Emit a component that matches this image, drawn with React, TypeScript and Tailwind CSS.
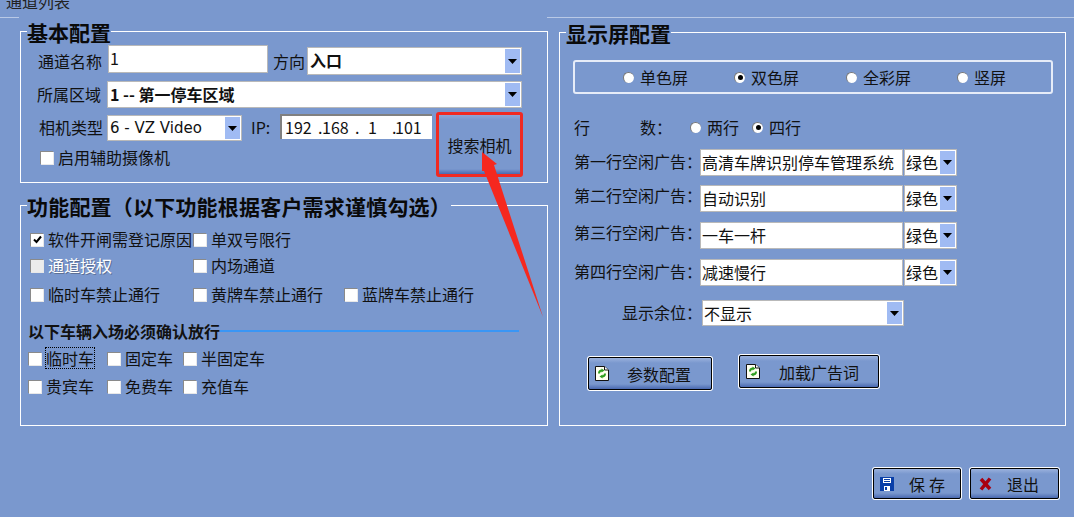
import React from 'react';

const Arrow = () => (
  <svg width="9" height="5" viewBox="0 0 9 5"><path d="M0 0h9L4.5 5z" fill="#000" /></svg>
);

const Combo: React.FC<{ text: string; className: string; bold?: boolean; textClass?: string }> = ({ text, className, bold, textClass }) => (
  <div className={`flex border border-[#b9b9b9] bg-white p-px shrink-0 ${className}`}>
    <span className={`flex-1 pl-px leading-[22px] whitespace-nowrap text-[#111] ${textClass ?? 'text-[16px]'} ${bold ? 'font-bold' : ''}`}>{text}</span>
    <span className="w-[15px] bg-[#a0bbf3] flex items-center justify-center shrink-0"><Arrow /></span>
  </div>
);

const Input: React.FC<{ text: string; className?: string }> = ({ text, className }) => (
  <div className={`border border-[#b9b9b9] bg-white pl-px text-[16px] leading-[24px] whitespace-nowrap text-[#111] shrink-0 h-[27px] ${className ?? ''}`}>{text}</div>
);

const Check: React.FC<{ label: string; className?: string; checked?: boolean; disabled?: boolean; focus?: boolean }> = ({ label, className, checked, disabled, focus }) => (
  <label className={`flex items-center h-[20px] shrink-0 ${className ?? ''}`}>
    <span className={`w-[13px] h-[13px] border-t border-l border-[#8a8a8a] shadow-[1px_1px_0_#e8e8e8] flex items-center justify-center shrink-0 ${disabled ? 'bg-[#ececec]' : 'bg-white'}`}>
      {checked && (
        <svg width="9" height="9" viewBox="0 0 9 9"><path d="M1 4.500 3.500 7 8 1.500" stroke="#000" strokeWidth="2" fill="none" /></svg>
      )}
    </span>
    <span className={`ml-[5px] text-[16px] leading-[20px] whitespace-nowrap ${disabled ? 'text-white [text-shadow:1px_1px_0_#5d7096]' : 'text-[#111]'} ${focus ? 'outline-1 outline-dotted outline-black' : ''}`}>{label}</span>
  </label>
);

const Radio: React.FC<{ label: string; className?: string; checked?: boolean }> = ({ label, className, checked }) => (
  <label className={`flex items-center h-[20px] shrink-0 ${className ?? ''}`}>
    <span className="w-[11px] h-[11px] rounded-full bg-white border-t border-l border-[#777] flex items-center justify-center shrink-0">
      {checked && <span className="w-[5px] h-[5px] rounded-full bg-black" />}
    </span>
    <span className="ml-[6px] text-[16px] leading-[20px] whitespace-nowrap text-[#111]">{label}</span>
  </label>
);

const RefreshDoc = () => (
  <svg width="14" height="15" viewBox="0 0 14 15" className="shrink-0">
    <path d="M.5.5h9l4 3.500v10.500H.5z" fill="#fffff0" stroke="#111" />
    <path d="M9.500.5v3.500h4" fill="#fff" stroke="#111" />
    <path d="M4 7.500c0-2 1.500-3 3-3" stroke="#2f9e1f" strokeWidth="2" fill="none" />
    <path d="M6.500 2.500l3 2-3 2z" fill="#2f9e1f" />
    <path d="M10 7.500c0 2-1.500 3-3 3" stroke="#2f9e1f" strokeWidth="2" fill="none" />
    <path d="M7.500 8.500l-3 2 3 2z" fill="#2f9e1f" />
  </svg>
);

const Floppy = () => (
  <svg width="14" height="14" viewBox="0 0 14 14" className="shrink-0">
    <path d="M0 0h14v14H0z" fill="#0a3fa8" />
    <path d="M3 1h8v5H3z" fill="#fff" />
    <path d="M4 2.500h6M4 4.500h6" stroke="#0a3fa8" />
    <path d="M4 9h6v5H4z" fill="#fff" />
    <path d="M5 10h2v3H5z" fill="#0a3fa8" />
  </svg>
);

const RedX = () => (
  <svg width="13" height="14" viewBox="0 0 13 14" className="shrink-0">
    <path d="M2 2l9 10M11 1.500 2 12.500" stroke="#a80010" strokeWidth="3.500" fill="none" />
  </svg>
);

const Btn: React.FC<{ icon: React.ReactNode; className?: string; children: React.ReactNode; textClass: string }> = ({ icon, className, children, textClass }) => (
  <button className={`flex items-center border border-black rounded-[2px] ring-1 ring-white bg-[linear-gradient(#9ab1dd_0,#7a98ce_5px,#7a98ce_calc(100%-5px),#4a69b0_100%)] text-[16px] text-[#111] shrink-0 ${className ?? ''}`}>
    {icon}
    <span className={`whitespace-nowrap ${textClass}`}>{children}</span>
  </button>
);

const Title: React.FC<{ text: string; className?: string }> = ({ text, className }) => (
  <h3 className={`w-fit bg-[#7a98ce] text-[21px] font-bold leading-[24px] -mt-[12px] ml-[6px] whitespace-nowrap text-[#0a0a0a] ${className ?? ''}`}>{text}</h3>
);

const adRows = [
  { label: '第一行空闲广告：', text: '高清车牌识别停车管理系统', mt: 'mt-[12px]', labelClass: '' },
  { label: '第二行空闲广告：', text: '自动识别', mt: 'mt-[9px]', labelClass: '-mt-[2px]' },
  { label: '第三行空闲广告：', text: '一车一杆', mt: 'mt-[10px]', labelClass: '-mt-[2px]' },
  { label: '第四行空闲广告：', text: '减速慢行', mt: 'mt-[10px]', labelClass: '' }
];

const App: React.FC = () => {
  return (
    <div className="relative w-[1074px] h-[517px] overflow-hidden bg-[#7a98ce] font-['Noto_Sans_CJK_SC','Noto_Sans',sans-serif] text-[#111]">
      <div className="flex h-[31px] relative">
        <span className="absolute left-[6px] -top-[9px] text-[16px] leading-[20px] text-[#222]">通道列表</span>
        <div className="w-[19px] h-px bg-[#b9c9e6] mt-[17px]" />
        <div className="ml-[528px] flex-1 h-px bg-[#b9c9e6] mt-[17px]" />
      </div>

      <div className="flex ml-[20px] gap-[11px]">
        <div className="w-[528px] shrink-0">
          <section className="border border-white h-[152px]">
            <Title text="基本配置" />
            <div className="flex mt-px pl-[17px] h-[30px]">
              <span className="w-[70px] text-[16px] leading-[32px]">通道名称</span>
              <Input text="1" className="w-[160px] h-[28px] border-[#777]" />
              <span className="ml-[5px] w-[34px] text-[16px] leading-[32px]">方向</span>
              <Combo text="入口" bold className="w-[215px] h-[28px] mt-[2px]" />
            </div>
            <div className="flex mt-[6px] pl-[16px]">
              <span className="w-[70px] text-[16px] leading-[27px]">所属区域</span>
              <Combo text="1 -- 第一停车区域" bold className="w-[415px] h-[27px]" />
            </div>
            <div className="flex mt-[4px] pl-[18px]">
              <div className="w-[397px]">
                <div className="flex items-start mt-[3px]">
                  <span className="w-[68px] text-[16px] leading-[24px]">相机类型</span>
                  <Combo text="6 - VZ Video" textClass="text-[15px] font-['DejaVu_Sans',sans-serif]" className="w-[135px] h-[26px]" />
                  <span className="ml-[9px] w-[29px] text-[16px] leading-[24px]">IP:</span>
                  <div className="w-[152px] h-[25px] -mt-px border-t-2 border-l-2 border-[#808080] bg-white flex text-[16px] leading-[23px] whitespace-nowrap">
                    <span className="ml-[3px] w-[33px]">192</span>
                    <span className="w-[4px]">.</span>
                    <span className="w-[33px]">168</span>
                    <span className="w-[13px]">.</span>
                    <span className="w-[24px]">1</span>
                    <span className="w-[3px]">.</span>
                    <span>101</span>
                  </div>
                </div>
                <Check label="启用辅助摄像机" className="mt-[6px] ml-px" />
              </div>
              <button className="w-[87px] h-[65px] border-[3px] border-[#f02a22] rounded-[3px] bg-[linear-gradient(#8ea7d8_0,#7a98ce_5px,#7a98ce_calc(100%-5px),#4a69b0_100%)] text-[16px] leading-[20px] text-[#111] whitespace-nowrap">搜索相机</button>
            </div>
          </section>

          <section className="border border-white h-[221px] mt-[22px]">
            <Title text="功能配置（以下功能根据客户需求谨慎勾选）" className="tracking-[0.2px]" />
            <div className="pl-[9px] mt-[11px]">
              <div className="flex">
                <Check label="软件开闸需登记原因" checked className="w-[163px]" />
                <Check label="单双号限行" />
              </div>
              <div className="flex mt-[6px]">
                <Check label="通道授权" disabled className="w-[163px]" />
                <Check label="内场通道" />
              </div>
              <div className="flex mt-[9px]">
                <Check label="临时车禁止通行" className="w-[163px]" />
                <Check label="黄牌车禁止通行" className="w-[151px]" />
                <Check label="蓝牌车禁止通行" />
              </div>
            </div>
            <div className="flex items-center pl-[7px] mt-[16px] h-[22px]">
              <span className="text-[16px] font-bold leading-[22px] whitespace-nowrap">以下车辆入场必须确认放行</span>
              <span className="w-[299px] h-[2px] bg-[#3a96f5]" />
            </div>
            <div className="pl-[7px] mt-[6px]">
              <div className="flex">
                <Check label="临时车" focus className="w-[79px]" />
                <Check label="固定车" className="w-[76px]" />
                <Check label="半固定车" />
              </div>
              <div className="flex mt-[8px]">
                <Check label="贵宾车" className="w-[79px]" />
                <Check label="免费车" className="w-[76px]" />
                <Check label="充值车" />
              </div>
            </div>
          </section>
        </div>

        <section className="border border-white w-[507px] h-[394px] mt-px shrink-0">
          <Title text="显示屏配置" />
          <div className="ml-[13px] mt-[15px] w-[480px] h-[34px] border-2 border-[#e6ecf8] rounded-[3px] flex items-center pl-[48px]">
            <Radio label="单色屏" className="w-[111px]" />
            <Radio label="双色屏" className="w-[112px]" checked />
            <Radio label="全彩屏" className="w-[111px]" />
            <Radio label="竖屏" />
          </div>
          <div className="flex items-center ml-[14px] mt-[23px] h-[20px]">
            <span className="w-[66px] text-[16px]">行</span>
            <span className="w-[50px] text-[16px]">数：</span>
            <Radio label="两行" className="w-[62px]" />
            <Radio label="四行" checked />
          </div>
          {adRows.map(row => (
            <div key={row.label} className={`flex ml-[14px] ${row.mt}`}>
              <span className={`w-[126px] text-[16px] leading-[25px] whitespace-nowrap ${row.labelClass}`}>{row.label}</span>
              <Input text={row.text} className="w-[203px]" />
              <Combo text="绿色" textClass="text-[16px] -ml-px" className="w-[53px] h-[27px] ml-px" />
            </div>
          ))}
          <div className="flex ml-[62px] mt-[14px]">
            <span className="w-[80px] text-[16px] leading-[25px]">显示余位：</span>
            <Combo text="不显示" textClass="text-[16px] -ml-px" className="w-[202px] h-[26px]" />
          </div>
          <div className="flex items-start ml-[28px] mt-[29px]">
            <Btn icon={<RefreshDoc />} className="w-[124px] h-[33px] mt-[2px] pl-[6px]" textClass="ml-[18px]"><span>参数配置</span></Btn>
            <Btn icon={<RefreshDoc />} className="w-[140px] h-[33px] ml-[27px] pl-[6px]" textClass="ml-[19px]"><span>加载广告词</span></Btn>
          </div>
        </section>
      </div>

      <div className="flex justify-end mt-[42px] pr-[15px] gap-[9px]">
        <Btn icon={<Floppy />} className="w-[88px] h-[31px] pl-[6px]" textClass="ml-[15px] tracking-[4px]"><span>保存</span></Btn>
        <Btn icon={<RedX />} className="w-[89px] h-[31px] pl-[8px]" textClass="ml-[15px]"><span>退出</span></Btn>
      </div>

      <svg className="absolute left-0 top-0 pointer-events-none" width="1074" height="517" viewBox="0 0 1074 517">
        <path d="M482 152 L497 164 L494 165 L543 317 L484 171 L482 171 Z" fill="#f5281f" />
      </svg>
    </div>
  );
};

export default App;
